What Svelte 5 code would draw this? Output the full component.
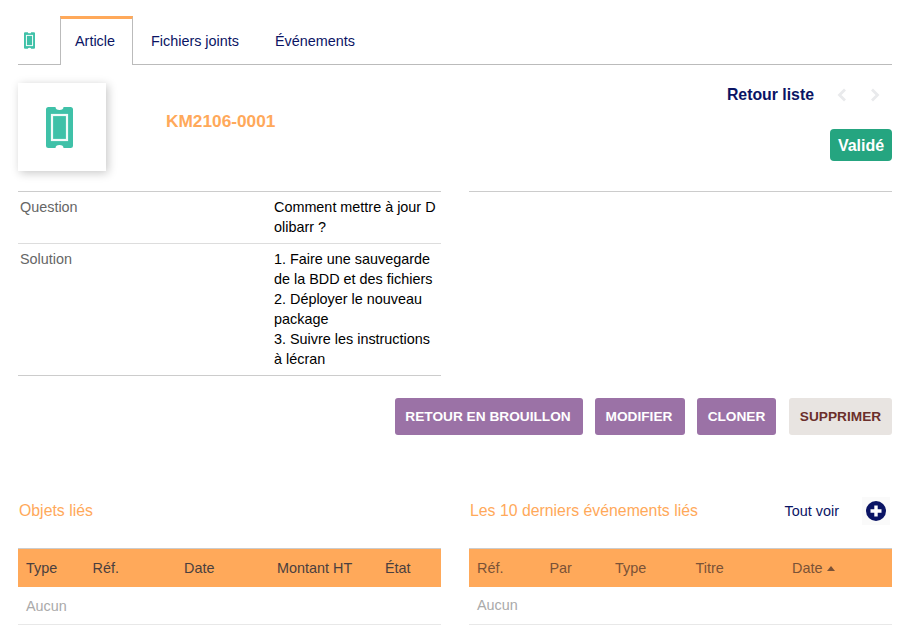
<script>
  const leftCols = [
    { label: 'Type', w: 66.5 },
    { label: 'Réf.', w: 91.5 },
    { label: 'Date', w: 93 },
    { label: 'Montant HT', w: 108 },
    { label: 'État', w: 64 }
  ];
  const rightCols = [
    { label: 'Réf.', w: 72.5 },
    { label: 'Par', w: 65.5 },
    { label: 'Type', w: 80.5 },
    { label: 'Titre', w: 96.5 },
    { label: 'Date', w: 108 }
  ];
  const buttons = [
    { label: 'RETOUR EN BROUILLON', cls: 'purple' },
    { label: 'MODIFIER', cls: 'purple' },
    { label: 'CLONER', cls: 'purple' },
    { label: 'SUPPRIMER', cls: 'grey' }
  ];
</script>

{#snippet ticket(w, h, sw)}
  <svg width={w} height={h} viewBox="0 0 27 41" aria-hidden="true">
    <path fill="#3fc1a8" d="M2.500 0H9.500a4 3 0 0 0 8 0H24.500a2.500 2.500 0 0 1 2.500 2.500V38.500a2.500 2.500 0 0 1-2.500 2.500H17.500a4 3 0 0 0-8 0H2.500a2.500 2.500 0 0 1-2.500-2.500V2.500A2.500 2.500 0 0 1 2.500 0Z"/>
    <rect x="6" y="8" width="15" height="25" fill="none" stroke="#f2fbf9" stroke-width={sw}/>
  </svg>
{/snippet}

<div class="page">
  <nav class="tabs">
    <div class="tab-icon">{@render ticket(11, 17, 2.500)}</div>
    <div class="tab active">Article</div>
    <div class="tab">Fichiers joints</div>
    <div class="tab">Événements</div>
  </nav>

  <header class="banner">
    <div class="photo">{@render ticket(27, 41, 2.200)}</div>
    <div class="ref">KM2106-0001</div>
    <div class="banner-right">
      <div class="pager">
        <span class="back">Retour liste</span>
        <svg class="chev first" width="10" height="14" viewBox="0 0 10 14"><path d="M8 1.500 2.500 7 8 12.500" /></svg>
        <svg class="chev" width="10" height="14" viewBox="0 0 10 14"><path d="M2 1.500 7.500 7 2 12.500" /></svg>
      </div>
      <div class="status">Validé</div>
    </div>
  </header>

  <section class="fields">
    <div class="col">
      <div class="row">
        <div class="key">Question</div>
        <div class="val">Comment mettre à jour D<br />olibarr ?</div>
      </div>
      <div class="row">
        <div class="key">Solution</div>
        <div class="val">1. Faire une sauvegarde<br />de la BDD et des fichiers<br />2. Déployer le nouveau<br />package<br />3. Suivre les instructions<br />à lécran</div>
      </div>
    </div>
    <div class="col"></div>
  </section>

  <div class="actions">
    {#each buttons as b}
      <button class={b.cls}>{b.label}</button>
    {/each}
  </div>

  <section class="lists">
    <div class="list">
      <div class="list-head"><h2>Objets liés</h2></div>
      <div class="thead dark">
        {#each leftCols as c}
          <div class="th" style="width:{c.w}px">{c.label}</div>
        {/each}
      </div>
      <div class="empty">Aucun</div>
    </div>
    <div class="list">
      <div class="list-head">
        <h2>Les 10 derniers événements liés</h2>
        <span class="see-all">Tout voir</span>
        <span class="add">
          <svg width="20" height="20" viewBox="0 0 20 20"><circle cx="10" cy="10" r="10" fill="#0a1464"/><path d="M10 4.500v11M4.500 10h11" stroke="#fff" stroke-width="3.400"/></svg>
        </span>
      </div>
      <div class="thead light">
        {#each rightCols as c, i}
          <div class="th" style="width:{c.w}px">{c.label}{#if i === 4}<span class="sort"></span>{/if}</div>
        {/each}
      </div>
      <div class="empty short">Aucun</div>
    </div>
  </section>
</div>

<style>
  :global(body) {
    margin: 0;
    background: #fff;
  }
  .page {
    width: 906px;
    height: 637px;
    overflow: hidden;
    box-sizing: border-box;
    padding: 16px 14px 0 18px;
    font-family: "Liberation Sans", Arial, sans-serif;
    font-size: 14.4px;
    color: #000;
  }
  .tabs {
    display: flex;
    height: 48px;
    border-bottom: 1px solid #bbb;
  }
  .tab-icon {
    width: 42px;
    box-sizing: border-box;
    padding: 16px 0 0 6px;
  }
  .tab {
    padding: 17px 18px 0 18px;
    color: #0a1464;
    font-size: 14.4px;
  }
  .tab.active {
    box-sizing: border-box;
    width: 73px;
    height: 49px;
    padding: 14px 0 0 14px;
    background: #fff;
    border: 1px solid #bbb;
    border-top: 3px solid #ffa95a;
    border-bottom: 0;
  }
  .banner {
    display: flex;
    margin-top: 18px;
    height: 108px;
  }
  .photo {
    box-sizing: border-box;
    width: 88px;
    height: 88px;
    padding-right: 5px;
    display: flex;
    align-items: center;
    justify-content: center;
    background: #fff;
    box-shadow: 2px 2px 9px rgba(0, 0, 0, 0.22);
  }
  .ref {
    margin: 28px 0 0 60px;
    font-size: 17.280px;
    font-weight: 700;
    color: #ffa95a;
  }
  .banner-right {
    margin-left: auto;
    display: flex;
    flex-direction: column;
    align-items: flex-end;
  }
  .pager {
    display: flex;
    align-items: center;
    height: 24px;
    margin-bottom: 22px;
  }
  .back {
    font-size: 15.840px;
    font-weight: 700;
    color: #0a1464;
  }
  .chev {
    margin: 0 12px 0 12px;
    fill: none;
    stroke: #e9eaec;
    stroke-width: 2.800;
  }
  .chev.first {
    margin: 0 11px 0 23px;
  }
  .status {
    box-sizing: border-box;
    width: 62px;
    height: 32px;
    padding-top: 1px;
    line-height: 32px;
    text-align: center;
    border-radius: 4px;
    background: #25a580;
    color: #fff;
    font-size: 16px;
    font-weight: 700;
  }
  .fields {
    display: flex;
    justify-content: space-between;
  }
  .col {
    width: 423px;
    border-top: 1px solid #ccc;
  }
  .row {
    display: flex;
    padding: 5px 0 6px 2px;
    line-height: 20px;
    border-bottom: 1px solid #ddd;
  }
  .row:last-child {
    border-bottom-color: #ccc;
  }
  .key {
    width: 254px;
    color: #666;
  }
  .val {
    white-space: nowrap;
  }
  .actions {
    display: flex;
    justify-content: flex-end;
    margin-top: 22px;
  }
  button {
    height: 37px;
    padding: 0;
    border: 0;
    border-radius: 3px;
    font-family: inherit;
    font-size: 13.680px;
    font-weight: 700;
    box-sizing: border-box;
  }
  button:nth-child(1) { width: 188px; margin-right: 12px; padding-right: 2px; }
  button:nth-child(2) { width: 90px; margin-right: 12px; padding-right: 2px; }
  button:nth-child(3) { width: 79px; margin-right: 13px; }
  button:nth-child(4) { width: 103px; }
  .purple {
    background: #9b72a6;
    color: #fff;
  }
  .grey {
    background: #e8e4e1;
    color: #6b2f2b;
  }
  .lists {
    display: flex;
    justify-content: space-between;
    margin-top: 58px;
  }
  .list {
    width: 423px;
  }
  .list-head {
    display: flex;
    align-items: center;
    height: 36px;
    padding-left: 1px;
    margin-bottom: 19px;
  }
  h2 {
    margin: 0;
    font-size: 15.840px;
    font-weight: 400;
    color: #ffa95a;
  }
  .see-all {
    margin-left: auto;
    color: #0a1464;
    font-size: 14.4px;
  }
  .add {
    display: flex;
    align-items: center;
    justify-content: center;
    width: 28px;
    height: 28px;
    margin: 0 2px 0 23px;
    background: #fafafa;
  }
  .thead {
    display: flex;
    height: 38px;
    align-items: center;
    background: #ffa95a;
    border-top: 1px solid #ccc;
    font-size: 14.4px;
  }
  .th {
    box-sizing: border-box;
    padding-left: 8px;
    flex: none;
  }
  .dark .th {
    color: #4a3f3f;
  }
  .light .th {
    color: #7a5237;
  }
  .sort {
    display: inline-block;
    margin-left: 5px;
    vertical-align: 2px;
    border-left: 4.500px solid transparent;
    border-right: 4.500px solid transparent;
    border-bottom: 5px solid #7a5237;
  }
  .empty {
    box-sizing: border-box;
    height: 38px;
    padding: 11px 0 0 8px;
    line-height: 17px;
    color: #aaa;
    border-bottom: 1px solid #e8e8e8;
  }
  .empty.short {
    padding-top: 10px;
  }
</style>
